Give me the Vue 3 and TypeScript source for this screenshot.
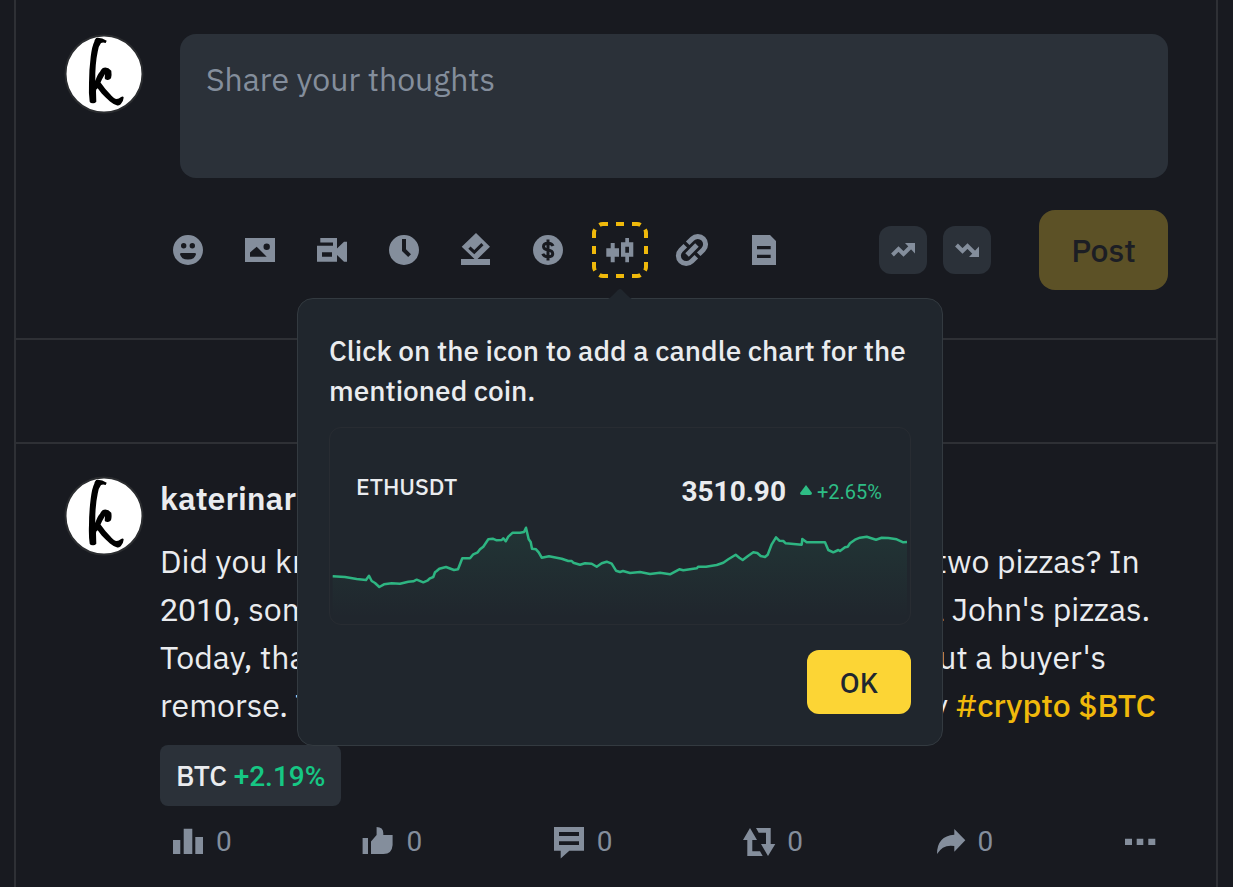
<script setup lang="ts">
import { ref } from 'vue'

interface Tool {
  name: string
  path: string
}

const draft = ref('')
const tipOpen = ref(true)

const disc = 'M16 1a15 15 0 1 0 0 30a15 15 0 1 0 0-30z'

const tools: Tool[] = [
  {
    name: 'Emoji',
    path: disc + 'M11.7 9a2.7 2.7 0 1 0 0 5.4a2.7 2.7 0 1 0 0-5.4zM20.3 9a2.7 2.7 0 1 0 0 5.4a2.7 2.7 0 1 0 0-5.4zM8 20Q8 19 9.5 19H22.500Q24 19 24 20Q23 25.500 16 25.500Q9 25.500 8 20z',
  },
  {
    name: 'Image',
    path: 'M1 4h30v24H1zM6 18.500v4.200h16.700L12.700 12.700zM22.700 9.500a3.200 3.200 0 1 0 0 6.400a3.200 3.200 0 1 0 0-6.400z',
  },
  {
    name: 'Video',
    path: 'M4.300 4H21v10.500l7-6.800h3v20h-3L21 21v6.700H1V11.700h16V8.500H4.300zM6 18.300v4.400h10v-4.400z',
  },
  { name: 'Schedule', path: disc + 'M14 5h4v10.200l5 5-2.800 2.800L14 17z' },
  {
    name: 'Poll',
    path: 'M16-1L30 12.700L17.500 25H30v6H1V25H14.500L1.700 12.700zM10.500 12.500L8.300 14.700L14.300 20.300L23.500 11.200L21.300 9L14.300 16z',
  },
  { name: 'Coin', path: disc },
  {
    name: 'Candle chart',
    path: 'M6.700 9h4v5.300H15v8.400h-4.300v5.600h-4v-5.600H2.300v-8.400h4.400zM21.300 4H25v4.300h4.300v14.400H25v5.600h-3.700v-5.600H17V8.300h4.300zM21.300 12.700v6H25v-6z',
  },
  { name: 'Link', path: '' },
  {
    name: 'Article',
    path: 'M4 1h18l6 6v24H4zM9 12v3.300h13.700V12zM9 20.700V24h13.700v-3.300z',
  },
]

const stats: Tool[] = [
  { name: 'Views', path: 'M1 14h7.300v14H1zM11.700 2.700h8.600V28h-8.600zM23.300 11H31v17h-7.700z' },
  { name: 'Like', path: 'M.6 12H6v16H.6zM9 28V15.500L14.600 9V1Q21.300 1 21.300 7V9H30.600V19Q30 28 21.500 28z' },
  { name: 'Comment', path: 'M1 1h30v23.700H16.300L7.700 32.500V24.700H1zM6 6v4h20V6zM6 15.200V19h20v-3.800z' },
  { name: 'Repost', path: 'M7 2L14 14H9.300V25.300H17L19.700 30H4.300V14H0zM13 2H27.700V18H32.300L25 30L18 18H23V6.700H15.700z' },
  { name: 'Share', path: 'M20.300 3L31.300 14.300L20.300 25.700V20Q9 18 3 28Q3 10 20.300 8.700z' },
]

const ethLine =
  '2.7,149.3 15,150 26.7,152 36,153 39,148.7 41.7,154 45,156 49.3,160 54,157.3 61.7,156.3 70,156.7 78.3,154.7 83.3,154.3 86.7,152.7 93.3,155.3 97.3,153.7 100,151.3 103.3,150 105,145.3 106.7,144 109.3,141.7 116,140 124,143 128,142.3 132.3,131.3 140,131.3 143.3,127.3 147.7,125.3 150,122.3 153.3,119.7 158.3,112.3 162.7,111.7 166.7,113.3 171.7,113 173.3,111.3 175.7,114.3 178.3,109.7 182.7,105.7 190,105.7 194,105 196,100.7 198.7,112.3 200.7,115 202,121.7 206,122.3 208.7,125.3 211.7,130.7 219,129.3 231.7,131.7 238.3,134 241.7,134 243.3,135.7 250,137.7 255,136.3 261.7,136.7 266.7,139.7 271.7,136.3 276.7,134.7 281.7,136.7 286,143.7 290,145 293,144 300,146 310,145 320,147 330,145.7 340,147.3 349.3,142.3 353.3,143.3 366.7,141.3 368.3,139.7 376,139.7 386.7,138 393.3,135.7 398.3,132.3 405.7,127.7 409.3,130.7 412.7,133 418.3,128.7 423.3,125.3 427.3,126 430.7,129 435,130 437.7,127.7 441.7,117.3 446,110.3 449.3,113.7 453.3,114 455.7,116.3 471.7,117.7 472.3,112 476.7,115.3 495,115.3 498.3,123 503.3,125.3 508.3,123 510,124 515,120.3 517.7,119.7 520,116.3 525,112.7 530,110.7 536.7,109.7 546,112.7 551.7,110.7 558.3,111 566.7,112.3 573.3,115.3 577,115'
const ethArea = `2.7,190 ${ethLine} 577,190`

const avatarK =
  'M33.300 3.700Q38 3.500 42.700 6.700L41.700 9Q39 8 37 9Q34.500 12 33.700 17.700Q31 30 31.300 47Q33.500 40 36 37.700Q38 33.700 40 33.700Q44 33 47.300 36.700Q48 41 47 44.300Q45 46.500 43.300 46Q40.500 45.500 40.700 44.300L41 40Q38 45 36.500 48.500Q41 55 46 60Q50 65 52.700 65Q55 65 56.700 63.300Q59 61.500 59.700 63.500Q59.500 67 56.700 70.300Q54.500 72 52.700 71.300Q49 70 46 67.500Q41 63 37.700 59.500L33.700 54.300Q32 55 32 57L32.300 67.700Q31 69.300 29.300 69.300Q26.500 69.500 25.700 67.700Q24.500 59 25 49.300Q25 36 26.700 22.700Q28 12 30.300 7.700Q31 4 33.300 3.700z'
</script>

<template>
  <main class="feed">
    <section class="composer">
      <svg class="avatar" viewBox="0 0 80 80" role="img" aria-label="Your avatar">
        <circle cx="40" cy="40" r="38.500" class="avatar-disc" />
        <path :d="avatarK" />
      </svg>
      <div class="composer-main">
        <textarea v-model="draft" class="thoughts" placeholder="Share your thoughts" aria-label="Share your thoughts"></textarea>
        <div class="toolbar">
          <div class="tools">
            <div v-for="tool in tools" :key="tool.name" class="tool">
              <button type="button" class="icon-button" :aria-label="tool.name">
                <svg class="icon" viewBox="0 0 32 32" aria-hidden="true">
                  <path v-if="tool.path" :d="tool.path" fill-rule="evenodd" />
                  <g v-if="tool.name === 'Coin'" class="coin-mark">
                    <path d="M16 5.500V26.500M21 12Q20 9.200 16 9.200Q11.500 9.200 11.500 12.500Q11.500 15.300 16 16Q20.700 16.800 20.700 19.700Q20.700 22.800 16 22.800Q12 22.800 10.800 19.800" />
                  </g>
                  <g v-if="tool.name === 'Link'" class="link-mark" transform="rotate(-45 16 16)">
                    <path d="M17.700 8.200h6.500a7.800 7.800 0 0 1 0 15.600h-6.500M14.300 23.800H7.800a7.800 7.800 0 0 1 0-15.600h6.500M9 16h14" />
                  </g>
                </svg>
              </button>
              <template v-if="tool.name === 'Candle chart' && tipOpen">
                <svg class="focus-ring" viewBox="0 0 56 56" aria-hidden="true">
                  <path
                    v-for="turn in [0, 90, 180, 270]"
                    :key="turn"
                    :transform="`rotate(${turn} 28 28)`"
                    d="M7.500 3Q9 2 11 2H16M24 2h8M40 2h5Q47 2 48.500 3"
                  />
                </svg>
                <div class="tip" role="dialog" aria-label="Candle chart tip">
                  <svg class="tip-arrow" viewBox="0 0 24 12" aria-hidden="true">
                    <path d="M0 12Q2 11 4 9L10 3Q12 1 14 3L20 9Q22 11 24 12z" />
                  </svg>
                  <p class="tip-text">Click on the icon to add a candle chart for the mentioned coin.</p>
                  <div class="quote">
                    <div class="quote-head">
                      <span class="pair">ETHUSDT</span>
                      <strong class="price">3510.90</strong>
                      <span class="change">
                        <svg class="rise" viewBox="0 0 12 10" aria-hidden="true"><path d="M6 0L12 8Q12 10 10 10H2Q0 10 0 8z" /></svg>
                        +2.65%
                      </span>
                    </div>
                    <svg class="quote-chart" viewBox="0 93 580 104" aria-hidden="true">
                      <defs>
                        <linearGradient id="eth-fade" x1="0" y1="0" x2="0" y2="1">
                          <stop offset="0" stop-color="#2ebd85" stop-opacity="0.100" />
                          <stop offset="1" stop-color="#2ebd85" stop-opacity="0" />
                        </linearGradient>
                      </defs>
                      <polygon :points="ethArea" fill="url(#eth-fade)" />
                      <polyline :points="ethLine" class="quote-line" />
                    </svg>
                  </div>
                  <button type="button" class="ok" @click="tipOpen = false">OK</button>
                </div>
              </template>
            </div>
          </div>
          <div class="actions">
            <button type="button" class="trend" aria-label="Bullish">
              <svg viewBox="0 0 24 24" aria-hidden="true">
                <path class="trend-stroke" d="M1.500 17L7.500 11L12.500 16L20 8.500" />
                <path d="M14 5h10v10.500z" />
              </svg>
            </button>
            <button type="button" class="trend" aria-label="Bearish">
              <svg viewBox="0 0 24 24" aria-hidden="true">
                <path class="trend-stroke" d="M1.500 7L7.500 13L12.500 8L20 15.500" />
                <path d="M14 19h10V8.500z" />
              </svg>
            </button>
            <button type="button" class="publish">Post</button>
          </div>
        </div>
      </div>
    </section>

    <div class="spacer"></div>

    <article class="entry">
      <svg class="avatar" viewBox="0 0 80 80" role="img" aria-label="katerinar avatar">
        <circle cx="40" cy="40" r="38.500" class="avatar-disc" />
        <path :d="avatarK" />
      </svg>
      <div class="entry-main">
        <h2 class="author">katerinar</h2>
        <p class="body">
          Did you know how the first Bitcoin transaction was for two pizzas? In<br />
          <span class="digits">2010</span>, someone spent <span class="digits">10,000</span> coins on a couple of Papa John's pizzas.<br />
          Today, that's worth over hundreds of millions. Talk about a buyer's<br />
          remorse. That is truly a rare wild piece of crypto history <a href="#crypto">#crypto</a> <a href="#btc">$BTC</a>
        </p>
        <a class="coin" href="#btc">BTC <span class="gain digits">+2.19%</span></a>
        <div class="stats">
          <button v-for="stat in stats" :key="stat.name" type="button" class="stat" :aria-label="stat.name">
            <svg class="icon" viewBox="0 0 32 32" aria-hidden="true"><path :d="stat.path" fill-rule="evenodd" /></svg>
            <span class="digits">0</span>
          </button>
          <button type="button" class="stat" aria-label="More">
            <svg class="icon" viewBox="0 0 32 32" aria-hidden="true"><path d="M1 12.700h7V19H1zM12.700 12.700h6.600V19h-6.600zM24.300 12.700h7V19h-7z" /></svg>
          </button>
        </div>
      </div>
    </article>
  </main>
</template>

<style>
body {
  margin: 0;
  background: #181a20;
}
</style>

<style scoped>
.feed,
.feed * {
  box-sizing: border-box;
}
.feed {
  min-height: 100vh;
  margin: 0 15px 0 14px;
  border: 0 solid #2e3035;
  border-width: 0 2px;
  color: #eaecef;
  font-family: "IBM Plex Sans", Roboto, "Noto Sans", sans-serif;
}
.digits {
  font-family: Roboto, "Noto Sans", sans-serif;
  line-height: 1;
}
button,
textarea {
  margin: 0;
  padding: 0;
  border: 0;
  background: none;
  color: inherit;
  font: inherit;
}
button {
  cursor: pointer;
}
svg {
  display: block;
  overflow: visible;
}
.avatar {
  flex: none;
  width: 80px;
  height: 80px;
}
.avatar-disc {
  fill: #fff;
  stroke: #2b2d30;
  stroke-width: 2;
}
.composer {
  display: flex;
  gap: 36px;
  padding: 34px 48px 48px;
  border-bottom: 2px solid #2e3035;
}
.composer-main {
  flex: 1;
  min-width: 0;
}
.thoughts {
  display: block;
  width: 100%;
  height: 144px;
  padding: 25px 26px;
  border-radius: 16px;
  background: #2b3139;
  font-size: 32px;
  line-height: 40px;
  resize: none;
  outline: none;
}
.thoughts::placeholder {
  color: #848e9c;
  opacity: 1;
}
.toolbar {
  display: flex;
  align-items: center;
  justify-content: space-between;
  margin-top: 32px;
  margin-left: -8px;
}
.tools {
  display: flex;
  gap: 40px;
}
.tool {
  position: relative;
}
.icon-button {
  display: block;
}
.icon {
  flex: none;
  width: 32px;
  height: 32px;
  fill: #848e9c;
}
.coin-mark {
  fill: none;
  stroke: #181a20;
  stroke-width: 3;
}
.link-mark {
  fill: none;
  stroke: #848e9c;
  stroke-width: 5;
}
.focus-ring {
  position: absolute;
  top: -12px;
  left: -12px;
  width: 56px;
  height: 56px;
  fill: none;
  stroke: #f0b90b;
  stroke-width: 4;
  pointer-events: none;
}
.tip {
  position: absolute;
  z-index: 1;
  top: 64px;
  left: 50%;
  width: 646px;
  padding: 32px 31px 31px;
  border: 1px solid #333a40;
  border-radius: 16px;
  background: #20262d;
  transform: translateX(-50%);
}
.tip-arrow {
  position: absolute;
  bottom: 100%;
  left: 50%;
  width: 24px;
  height: 12px;
  margin-left: -12px;
  fill: #20262d;
}
.tip-text {
  margin: 0 0 16px;
  font-size: 28px;
  font-weight: 500;
  line-height: 40px;
}
.quote {
  border: 1px solid #282c32;
  border-radius: 12px;
}
.quote-head {
  display: flex;
  align-items: flex-start;
  height: 92px;
  padding: 43px 28px 0 26px;
  line-height: 42px;
}
.pair {
  flex: 1;
  font-size: 23px;
  font-weight: 500;
  line-height: 30px;
}
.price {
  font-family: Roboto, "Noto Sans", sans-serif;
  font-size: 28px;
  font-weight: 700;
}
.change {
  display: flex;
  align-items: center;
  gap: 5px;
  margin-left: 14px;
  color: #2ebd85;
  font-family: Roboto, "Noto Sans", sans-serif;
  font-size: 20px;
}
.rise {
  width: 12px;
  height: 10px;
  margin-bottom: 4px;
  fill: #2ebd85;
}
.quote-chart {
  width: 100%;
}
.quote-line {
  fill: none;
  stroke: #2eb582;
  stroke-width: 2.500;
  stroke-linejoin: round;
}
.ok {
  display: block;
  width: 104px;
  height: 64px;
  margin: 25px 0 0 auto;
  border-radius: 12px;
  background: #fcd535;
  color: #202630;
  font-size: 28px;
  font-weight: 500;
}
.actions {
  display: flex;
  align-items: center;
  gap: 16px;
}
.trend {
  display: grid;
  place-items: center;
  width: 48px;
  height: 48px;
  border-radius: 12px;
  background: #2b3139;
}
.trend svg {
  width: 24px;
  height: 24px;
  fill: #848e9c;
}
.trend-stroke {
  fill: none;
  stroke: #848e9c;
  stroke-width: 4;
}
.publish {
  width: 129px;
  height: 80px;
  margin-left: 32px;
  border-radius: 16px;
  background: #5c5126;
  color: #1c1e24;
  font-size: 32px;
  font-weight: 500;
}
.spacer {
  height: 104px;
  border-bottom: 2px solid #2e3035;
}
.entry {
  display: flex;
  gap: 16px;
  padding: 32px 48px 24px;
}
.entry-main {
  flex: 1;
  min-width: 0;
}
.author {
  margin: 0 0 17px;
  font-size: 32px;
  font-weight: 600;
  line-height: 44px;
}
.body {
  margin: 0 0 16px;
  font-size: 32px;
  line-height: 48px;
  white-space: nowrap;
}
.body a {
  color: #f0b90b;
  font-weight: 500;
  text-decoration: none;
}
.coin {
  display: inline-block;
  padding: 0 16px;
  border-radius: 8px;
  background: #2b3139;
  color: #eaecef;
  font-size: 28px;
  font-weight: 500;
  line-height: 61px;
  text-decoration: none;
}
.gain {
  color: #16c784;
}
.stats {
  display: grid;
  grid-template-columns: repeat(5, 1fr) 32px;
  align-items: center;
  margin-top: 20px;
  padding: 0 12px;
}
.stat {
  display: flex;
  align-items: center;
  justify-self: start;
  gap: 12px;
  color: #848e9c;
  font-size: 28px;
  line-height: 32px;
}
</style>
